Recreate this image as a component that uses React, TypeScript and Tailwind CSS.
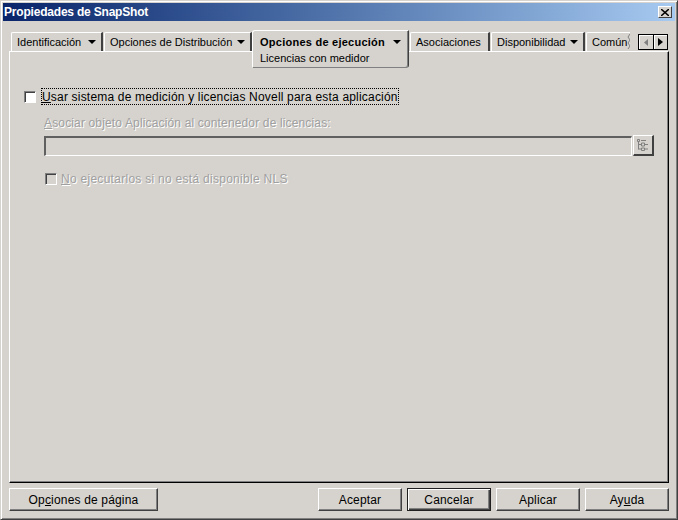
import type { ReactNode } from "react";

function DownArrow() {
  return (
    <svg className="w-[8px] h-[4px] shrink-0" viewBox="0 0 8 4">
      <path d="M0 0h8L4 4z" fill="#000" />
    </svg>
  );
}

function Tab({
  label,
  width,
  arrow,
}: {
  label: string;
  width: string;
  arrow?: boolean;
}) {
  return (
    <div
      className={`${width} h-[19px] flex items-center justify-between pl-[5px] pr-[5px] shrink-0 border-t border-l border-white rounded-tl-[2px] border-r-2 border-r-[#404040] text-[11px] text-black`}
    >
      <span className="whitespace-nowrap">{label}</span>
      {arrow && <DownArrow />}
    </div>
  );
}

function DialogButton({
  children,
  width,
  isDefault,
}: {
  children: ReactNode;
  width: string;
  isDefault?: boolean;
}) {
  return (
    <button
      className={`${width} h-[23px] flex items-center justify-center text-[12px] tracking-[0.17px] text-black bg-[#d6d3ce] ${
        isDefault
          ? "border border-[#202020] shadow-[inset_1px_1px_0_#fff,inset_-1px_-1px_0_#404040,inset_-2px_-2px_0_#808080]"
          : "border-t border-l border-white border-r border-b border-r-[#404040] border-b-[#404040] shadow-[inset_-1px_-1px_0_#808080]"
      }`}
    >
      {children}
    </button>
  );
}

function Checkbox({ disabled }: { disabled?: boolean }) {
  return (
    <span
      className={`block w-[12px] h-[12px] shrink-0 border-t border-l border-[#808080] border-r border-b border-r-white border-b-white shadow-[inset_1px_1px_0_#404040] ${
        disabled ? "bg-[#d6d3ce]" : "bg-white"
      }`}
    />
  );
}

export default function App() {
  return (
    <div className="w-[678px] h-[520px] flex flex-col bg-[#d6d3ce] border-t border-l border-t-[#d6d3ce] border-l-[#d6d3ce] border-r border-b border-r-[#404040] border-b-[#404040] shadow-[inset_1px_1px_0_#fff,inset_-1px_-1px_0_#808080] p-[2px] font-['Liberation_Sans',Arial,sans-serif] overflow-hidden">
      <div className="h-[18px] shrink-0 flex items-center justify-between pl-[1px] pr-[3px] bg-gradient-to-r from-[#0a246a] to-[#a6caf0]">
        <span className="text-[12px] leading-none font-bold text-white tracking-[-0.2px]">
          Propiedades de SnapShot
        </span>
        <button className="w-[14px] h-[12px] flex items-center justify-center bg-[#d6d3ce] border-t border-l border-white border-r border-b border-r-[#404040] border-b-[#404040]">
          <svg className="w-[8px] h-[7px]" viewBox="0 0 8 7">
            <path d="M0 0l8 7M8 0L0 7" stroke="#000" strokeWidth="1.5" />
          </svg>
        </button>
      </div>

      <div className="h-[30px] shrink-0 flex items-end pl-[8px] relative z-10">
        <Tab label="Identificación" width="w-[92px] mr-[1px]" arrow />
        <Tab label="Opciones de Distribución" width="w-[148px]" arrow />
        <div className="w-[157px] h-[38px] -mb-[17px] shrink-0 flex flex-col pl-[7px] pr-[7px] pt-[4px] bg-[#d6d3ce] border-t border-l border-white border-r border-b border-r-[#404040] border-b-[#808080] rounded-tl-[3px] rounded-br-[3px] shadow-[inset_-1px_0_0_#808080]">
          <div className="flex items-center justify-between">
            <span className="text-[11px] font-bold tracking-[0.25px] leading-[14px] whitespace-nowrap">
              Opciones de ejecución
            </span>
            <DownArrow />
          </div>
          <span className="text-[11px] leading-[14px] mt-[2px] whitespace-nowrap">
            Licencias con medidor
          </span>
        </div>
        <Tab label="Asociaciones" width="w-[80px] ml-[1px] mr-[1px]" />
        <Tab label="Disponibilidad" width="w-[94px] mr-[1px]" arrow />
        <div className="w-[44px] h-[19px] flex items-center pl-[5px] shrink-0 border-t border-l border-white rounded-tl-[2px] text-[11px] overflow-hidden">
          <span className="whitespace-nowrap">Común</span>
          <svg className="w-[4px] h-[17px] shrink-0" viewBox="0 0 4 17">
            <path d="M3 0L1 3l2 3-2 3 2 3-2 3" stroke="#808080" fill="none" />
          </svg>
        </div>
        <div className="flex ml-[8px] mb-[1px] shrink-0">
          <button className="w-[16px] h-[16px] flex items-center justify-center bg-[#d6d3ce] border border-black shadow-[inset_1px_1px_0_#fff]">
            <svg className="w-[4px] h-[7px]" viewBox="0 0 4 7">
              <path d="M4 0v7L0 3.5z" fill="#808080" />
            </svg>
          </button>
          <button className="w-[15px] h-[16px] -ml-px flex items-center justify-center bg-[#d6d3ce] border border-black shadow-[inset_1px_1px_0_#fff]">
            <svg className="w-[5px] h-[8px]" viewBox="0 0 5 8">
              <path d="M0 0v8l5-4z" fill="#000" />
            </svg>
          </button>
        </div>
      </div>

      <div className="flex-1 min-h-0 ml-[6px] mr-[6px] border-t border-l border-white border-r border-b border-r-black border-b-black shadow-[inset_-1px_-1px_0_#808080] flex flex-col pl-[14px] pt-[36px]">
        <div className="flex items-center">
          <Checkbox />
          <span className="ml-[5px] h-[17px] flex items-center px-[1px] outline outline-1 outline-dotted outline-black -outline-offset-1 text-[12px] tracking-[0.19px] whitespace-nowrap text-black">
            <span className="underline">U</span>sar sistema de medición y licencias Novell para esta aplicación
          </span>
        </div>

        <div className="ml-[20px] mt-[11px] text-[12px] tracking-[0.15px] leading-[14px] text-[#a0a0a0] [text-shadow:1px_1px_0_#fff] whitespace-nowrap">
          <span className="underline">A</span>sociar objeto Aplicación al contenedor de licencias:
        </div>

        <div className="ml-[20px] mt-[5px] flex items-center">
          <div className="w-[588px] h-[20px] border-t-2 border-l-2 border-t-[#606060] border-l-[#606060] border-r border-b border-r-white border-b-white" />
          <button className="w-[21px] h-[21px] ml-[1px] flex items-center justify-center bg-[#d6d3ce] border-t border-l border-white border-r-2 border-b-2 border-r-[#404040] border-b-[#404040]">
            <svg className="w-[12px] h-[12px]" viewBox="0 0 12 12" fill="none" stroke="#808080">
              <path d="M.5.5h2v2h-2zM4 1.5h5M1.500 3v7.500M1.500 5.500h3M1.500 10h3M4.500 4h3v3h-3zM4.500 9h3v2.500h-3zM8 5.500h3M8 10h3" />
            </svg>
          </button>
        </div>

        <div className="ml-[21px] mt-[14px] flex items-center">
          <Checkbox disabled />
          <span className="ml-[4px] text-[12px] tracking-[0.28px] text-[#a0a0a0] [text-shadow:1px_1px_0_#fff] whitespace-nowrap">
            <span className="underline">N</span>o ejecutarlos si no está disponible NLS
          </span>
        </div>
      </div>

      <div className="shrink-0 flex items-start ml-[6px] mr-[6px] mt-[5px] mb-[6px]">
        <DialogButton width="w-[149px]">
          Op<span className="underline">c</span>iones de página
        </DialogButton>
        <div className="ml-auto flex gap-[5px]">
          <DialogButton width="w-[84px]">Aceptar</DialogButton>
          <DialogButton width="w-[84px]" isDefault>
            Cancelar
          </DialogButton>
          <DialogButton width="w-[84px]">Aplicar</DialogButton>
          <DialogButton width="w-[84px]">
            Ay<span className="underline">u</span>da
          </DialogButton>
        </div>
      </div>
    </div>
  );
}
